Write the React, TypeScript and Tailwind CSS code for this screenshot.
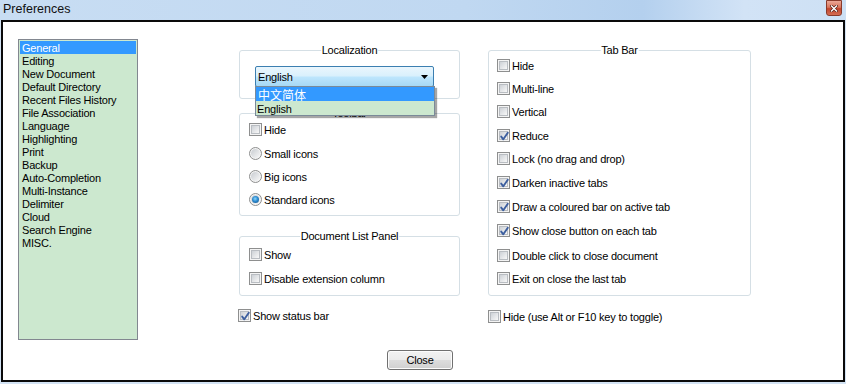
import React from "react";

const listItems = [
  "General",
  "Editing",
  "New Document",
  "Default Directory",
  "Recent Files History",
  "File Association",
  "Language",
  "Highlighting",
  "Print",
  "Backup",
  "Auto-Completion",
  "Multi-Instance",
  "Delimiter",
  "Cloud",
  "Search Engine",
  "MISC.",
];

const tabItems = [
  { label: "Hide", checked: false, mt: "" },
  { label: "Multi-line", checked: false, mt: "mt-[10px]" },
  { label: "Vertical", checked: false, mt: "mt-[10px]" },
  { label: "Reduce", checked: true, mt: "mt-[11px]" },
  { label: "Lock (no drag and drop)", checked: false, mt: "mt-[10px]" },
  { label: "Darken inactive tabs", checked: true, mt: "mt-[11px]" },
  { label: "Draw a coloured bar on active tab", checked: true, mt: "mt-[11px]" },
  { label: "Show close button on each tab", checked: true, mt: "mt-[11px]" },
  { label: "Double click to close document", checked: false, mt: "mt-[12px]" },
  { label: "Exit on close the last tab", checked: false, mt: "mt-[10px]" },
];

function Box({ checked }: { checked: boolean }) {
  return (
    <span className="relative w-[13px] h-[13px] shrink-0 border border-[#8e8f8f] bg-[#f4f4f4] p-[1px] flex">
      <span className="flex-1 border border-[#b9bdc2] bg-[linear-gradient(135deg,#cdd1d6,#f8f8f8)]" />
      {checked && (
        <svg className="absolute left-[1px] top-[1px]" width="11" height="11" viewBox="0 0 11 11">
          <path d="M2.2 5.6 L4.3 8.3 L8.8 1.8" fill="none" stroke="#3d5f9f" strokeWidth="1.9" strokeLinecap="round" strokeLinejoin="round" />
        </svg>
      )}
    </span>
  );
}

function Radio({ checked }: { checked: boolean }) {
  return (
    <span className="w-[13px] h-[13px] shrink-0 rounded-full border border-[#8e8f8f] bg-[#f4f4f4] p-[1px] flex">
      <span className="flex-1 rounded-full bg-[linear-gradient(135deg,#c8ccd1,#f8f8f8)] flex items-center justify-center">
        {checked && (
          <span className="w-[7px] h-[7px] rounded-full bg-[radial-gradient(circle_at_45%_40%,#8fd8fb_0%,#2b8ad0_45%,#164d7e_100%)]" />
        )}
      </span>
    </span>
  );
}

function CheckRow({ label, checked, className = "" }: { label: string; checked: boolean; className?: string }) {
  return (
    <div className={`flex items-center gap-[2px] h-[13px] whitespace-nowrap ${className}`}>
      <Box checked={checked} />
      <span className="leading-[14px] pt-[1px]">{label}</span>
    </div>
  );
}

function RadioRow({ label, checked, className = "" }: { label: string; checked: boolean; className?: string }) {
  return (
    <div className={`flex items-center gap-[2px] h-[13px] whitespace-nowrap ${className}`}>
      <Radio checked={checked} />
      <span className="leading-[14px] pt-[1px]">{label}</span>
    </div>
  );
}

function Group({ title, className = "", children }: { title: string; className?: string; children?: React.ReactNode }) {
  return (
    <div className={`relative border border-[#d5dfe5] rounded-[3px] ${className}`}>
      <span className="absolute -top-[7px] left-1/2 -translate-x-1/2 bg-white px-[1px] leading-[13px] whitespace-nowrap">
        {title}
      </span>
      {children}
    </div>
  );
}

export default function App() {
  return (
    <div className="w-[846px] h-[384px] overflow-hidden bg-[#d3e3f4] font-['Liberation_Sans',Arial,sans-serif] text-[11px] tracking-[-0.2px] text-black">
      {/* Title bar */}
      <div className="h-[20px] flex items-start bg-[linear-gradient(90deg,#c8ddf3_0%,#c0d8f1_55%,#b4d0ee_76%,#d2e3f6_88%,#cde0f4_100%)]">
        <span className="ml-[3px] mt-[2px] text-[12.5px] leading-[14px] tracking-normal text-[#111]">Preferences</span>
        <div className="ml-auto mr-[4px] w-[16px] h-[16px] rounded-b-[3px] border border-[#8a3a2a] bg-[linear-gradient(180deg,#eba796_0%,#d8755b_45%,#c2432b_55%,#d36d52_100%)] flex items-center justify-center">
          <svg width="8" height="7" viewBox="0 0 8 7">
            <path d="M1.5 1 L6.5 6 M6.5 1 L1.5 6" stroke="#5a2218" strokeWidth="2.8" strokeLinecap="square" />
            <path d="M1.5 1 L6.5 6 M6.5 1 L1.5 6" stroke="#ffffff" strokeWidth="1.4" strokeLinecap="square" />
          </svg>
        </div>
      </div>

      {/* Body */}
      <div className="mx-[1px] w-[844px] h-[362px] border-2 border-[#0a0a0a] bg-white flex items-start pl-[15px] pt-[17px]">
        {/* Left list */}
        <div className="w-[120px] h-[301px] shrink-0 border border-[#828790] bg-[#cce8cf] p-[1px]">
          {listItems.map((item, i) => (
            <div
              key={item}
              className={`h-[13px] leading-[15px] pl-[2px] whitespace-nowrap ${i === 0 ? "bg-[#3399ff] text-white" : ""}`}
            >
              {item}
            </div>
          ))}
        </div>

        {/* Right area */}
        <div className="ml-[101px] pt-[11px] flex flex-col">
          <div className="flex items-start gap-[28px]">
            {/* Middle column */}
            <div className="w-[221px] flex flex-col">
              <Group title="Localization" className="h-[49px] z-10">
                <div className="relative ml-[15px] mt-[15px] w-[179px] h-[21px] border border-[#3c7fb1] rounded-[2px] bg-[linear-gradient(180deg,#eaf6fd_0%,#d9f0fc_48%,#bee6fd_52%,#a7d9f5_100%)] flex items-center">
                  <span className="pl-[2px] leading-[14px] pt-[1px]">English</span>
                  <svg className="ml-auto mr-[5px]" width="7" height="4" viewBox="0 0 7 4">
                    <path d="M0 0 H7 L3.5 4 Z" fill="#000" />
                  </svg>
                  <div className="absolute left-[-1px] top-[19px] w-[180px] border border-[#7a8a99] bg-white shadow-[2px_2px_1px_rgba(0,0,0,0.35)] z-20">
                    <div className="h-[14px] leading-[15px] pl-[2px] bg-[#3399ff] text-white text-[12px] tracking-normal font-['Noto_Sans_CJK_SC',sans-serif]">
                      中文简体
                    </div>
                    <div className="h-[14px] leading-[16px] pl-[1px] bg-[#cce8cf]">English</div>
                  </div>
                </div>
              </Group>

              <Group title="Toolbar" className="mt-[14px] h-[103px] pl-[9px] pt-[9px]">
                <CheckRow label="Hide" checked={false} />
                <RadioRow label="Small icons" checked={false} className="mt-[11px]" />
                <RadioRow label="Big icons" checked={false} className="mt-[10px]" />
                <RadioRow label="Standard icons" checked={true} className="mt-[10px]" />
              </Group>

              <Group title="Document List Panel" className="mt-[20px] h-[60px] pl-[9px] pt-[11px]">
                <CheckRow label="Show" checked={false} />
                <CheckRow label="Disable extension column" checked={false} className="mt-[11px]" />
              </Group>

              <CheckRow label="Show status bar" checked={true} className="mt-[13px] -ml-[1px]" />
            </div>

            {/* Right column */}
            <div className="w-[263px] flex flex-col">
              <Group title="Tab Bar" className="h-[246px] pl-[8px] pt-[8px]">
                {tabItems.map((t) => (
                  <CheckRow key={t.label} label={t.label} checked={t.checked} className={t.mt} />
                ))}
              </Group>
              <CheckRow label="Hide (use Alt or F10 key to toggle)" checked={false} className="mt-[14px]" />
            </div>
          </div>

          <button className="ml-[148px] mt-[27px] w-[66px] h-[20px] rounded-[3px] border border-[#707070] bg-[linear-gradient(180deg,#f2f2f2_0%,#ebebeb_48%,#dddddd_52%,#cfcfcf_100%)] shadow-[inset_0_0_0_1px_#fcfcfc] text-[11px] leading-[13px] text-black">
            Close
          </button>
        </div>
      </div>
    </div>
  );
}
